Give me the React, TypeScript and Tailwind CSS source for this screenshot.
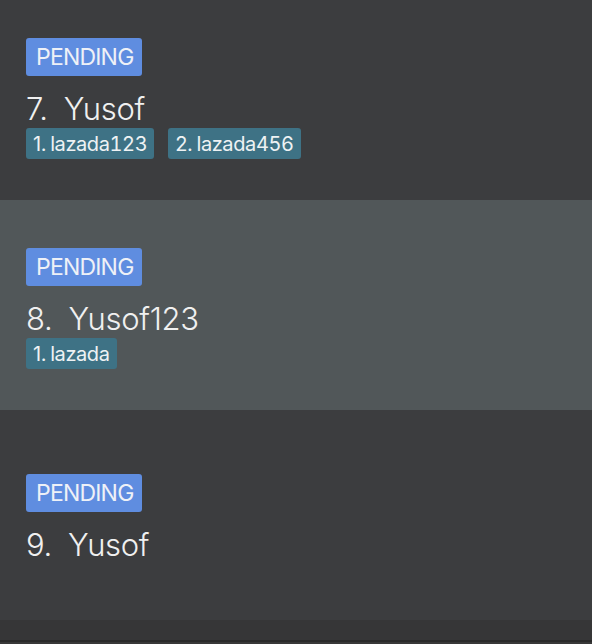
import React from "react";

type Item = { n: number; name: string; tags: string[] };

const items: Item[] = [
  { n: 7, name: "Yusof", tags: ["lazada123", "lazada456"] },
  { n: 8, name: "Yusof123", tags: ["lazada"] },
  { n: 9, name: "Yusof", tags: [] },
];

function Row({ item, idx }: { item: Item; idx: number }) {
  const bg = idx % 2 === 1 ? "bg-[#515759]" : "bg-[#3c3d3f]";
  return (
    <div
      className={`${bg} h-[210px] shrink-0 flex flex-col justify-center pl-[26px] pt-[7px] font-['Inter',sans-serif] ${idx === 0 ? "-mt-[10px]" : ""}`}
    >
      <div className="self-start h-[38px] pl-[10px] pr-[8px] flex items-center rounded-[3px] bg-[#5f8de0] text-[#eef1f7] text-[23px] tracking-[-0.8px]">
        PENDING
      </div>
      <div className="mt-[15px] h-[36px] flex text-[31px] leading-[36px] text-[#f0f0f0] font-light tracking-[-0.3px]">
        <span>{item.n}.</span>
        <span className="ml-[16px]">{item.name}</span>
      </div>
      {item.tags.length > 0 && (
        <div className="flex gap-[14px] mt-[1px]">
          {item.tags.map((t, i) => (
            <div
              key={t}
              className="h-[31px] px-[7px] flex items-center rounded-[3px] bg-[#3e7285] text-[#eef2f4] text-[20px] tracking-[-0.4px]"
            >
              <span>{i + 1}.</span>
              <span className="ml-[4px] tabular-nums">{t}</span>
            </div>
          ))}
        </div>
      )}
    </div>
  );
}

export default function App() {
  return (
    <div className="w-[592px] h-[644px] overflow-hidden bg-[#363637] flex flex-col">
      {items.map((it, i) => (
        <Row key={it.n} item={it} idx={i} />
      ))}
      <div className="h-[20px] shrink-0 bg-[#363637]" />
      <div className="h-[2px] shrink-0 bg-[#2a2a2a]" />
      <div className="flex-1 bg-[#383838]" />
    </div>
  );
}
